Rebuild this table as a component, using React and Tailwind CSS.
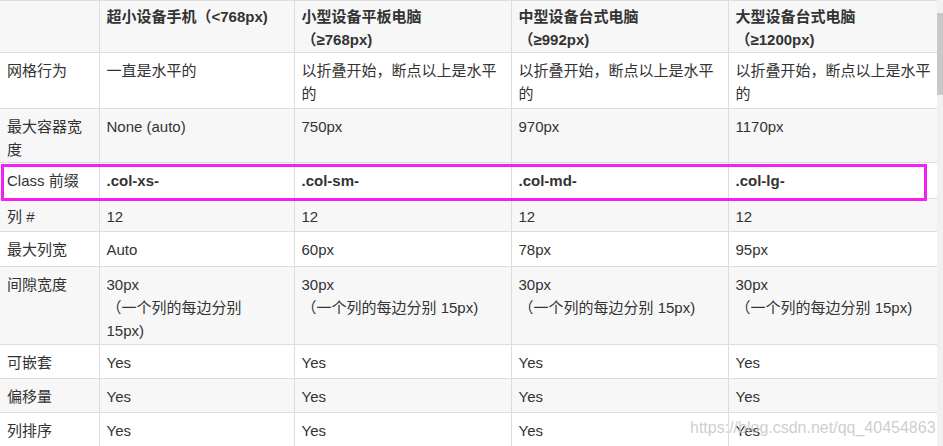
import React from 'react';

// Bootstrap grid options table, as shown in a CSDN post
const headers = [
	'',
	['超小设备手机（<768px)'],
	['小型设备平板电脑', '（≥768px)'],
	['中型设备台式电脑', '（≥992px)'],
	['大型设备台式电脑', '（≥1200px)'],
];

const rows = [
	{ h: 56, cells: [['网格行为'], ['一直是水平的'], ['以折叠开始，断点以上是水平', '的'], ['以折叠开始，断点以上是水平', '的'], ['以折叠开始，断点以上是水平', '的']] },
	{ h: 54, cells: [['最大容器宽', '度'], ['None (auto)'], ['750px'], ['970px'], ['1170px']] },
	{ h: 36, bold: true, cells: [['Class 前缀'], ['.col-xs-'], ['.col-sm-'], ['.col-md-'], ['.col-lg-']] },
	{ h: 33, cells: [['列 #'], ['12'], ['12'], ['12'], ['12']] },
	{ h: 35, cells: [['最大列宽'], ['Auto'], ['60px'], ['78px'], ['95px']] },
	{ h: 78, cells: [['间隙宽度'], ['30px', '（一个列的每边分别', '15px)'], ['30px', '（一个列的每边分别 15px)'], ['30px', '（一个列的每边分别 15px)'], ['30px', '（一个列的每边分别 15px)']] },
	{ h: 34, cells: [['可嵌套'], ['Yes'], ['Yes'], ['Yes'], ['Yes']] },
	{ h: 34, cells: [['偏移量'], ['Yes'], ['Yes'], ['Yes'], ['Yes']] },
	{ h: 34, cells: [['列排序'], ['Yes'], ['Yes'], ['Yes'], ['Yes']] },
];

const widths = ['w-[99px]', 'w-[195px]', 'w-[217px]', 'w-[217px]', 'w-[209px]'];

const Lines = ({ lines }) =>
	lines.map((l, i) => (
		<div key={i} className="whitespace-nowrap">
			{l}
		</div>
	));

const App = () => {
	return (
		<div
			className="relative flex w-[943px] h-[446px] overflow-hidden bg-white text-[#333] text-[15px] leading-[23px]"
			style={{ fontFamily: '"Liberation Sans", "Noto Sans CJK SC", sans-serif' }}
		>
			<div className="w-[937px] shrink-0">
				<table className="table-fixed border-collapse w-[937px]">
					<colgroup>
						{widths.map((w, i) => (
							<col key={i} className={w} />
						))}
					</colgroup>
					<thead>
						<tr className="bg-[#f7f7f7]">
							{headers.map((hd, i) => (
								<th
									key={i}
									className={`h-[52px] align-top text-left font-bold pl-[7px] pt-[4px] border border-[#dddddd] ${i === 0 ? 'border-l-0' : ''}`}
								>
									{hd ? <Lines lines={hd} /> : null}
								</th>
							))}
						</tr>
					</thead>
					<tbody>
						{rows.map((r, ri) => (
							<tr key={ri} className={ri % 2 === 1 ? 'bg-[#f7f7f7]' : 'bg-white'}>
								{r.cells.map((c, ci) => (
									<td
										key={ci}
										style={{ height: r.h }}
										className={`align-top pl-[7px] pt-[6px] border border-[#dddddd] ${ci === 0 ? 'border-l-0' : ''} ${r.bold && ci > 0 ? 'font-bold' : ''}`}
									>
										<Lines lines={c} />
									</td>
								))}
							</tr>
						))}
					</tbody>
				</table>
			</div>

			{/* scrollbar */}
			<div className="w-[6px] shrink-0 bg-[#f1f1f1] pt-[13px]">
				<div className="h-[82px] bg-[#c8c8c8]" />
			</div>

			{/* highlight box around the class prefix row */}
			<div className="absolute left-[1px] top-[164px] w-[926px] h-[37px] border-[3px] border-[#f51ff5] pointer-events-none" />

			{/* watermark */}
			<div className="absolute left-[690px] top-[417px] text-[16px] leading-[22px] text-[#c8c8c8]/90 whitespace-nowrap">
				https://blog.csdn.net/qq_40454863
			</div>
		</div>
	);
};

export default App;
